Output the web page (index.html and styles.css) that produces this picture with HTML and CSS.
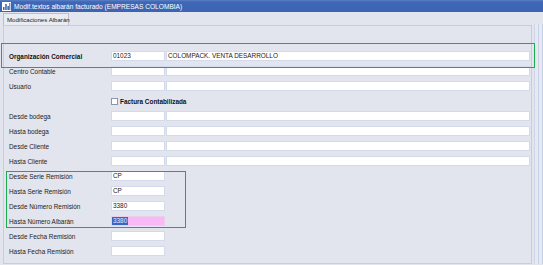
FILE: index.html
```html
<!DOCTYPE html>
<html>
<head>
<meta charset="utf-8">
<link rel="stylesheet" href="styles.css">
</head>
<body>
<div class="window">
  <div class="titlebar">
    <svg class="appicon" width="9" height="9" viewBox="0 0 9 9">
      <rect x="0" y="0" width="9" height="9" fill="#ffffff"/>
      <rect x="1" y="5" width="1.5" height="3" fill="#3a62b3"/>
      <rect x="3.2" y="2" width="1.5" height="6" fill="#3a62b3"/>
      <rect x="5.4" y="4" width="1.5" height="4" fill="#3a62b3"/>
      <rect x="7.3" y="1" width="1" height="7" fill="#3a62b3"/>
    </svg>
    <span class="title">Modif.textos albarán facturado (EMPRESAS COLOMBIA)</span>
  </div>
  <div class="tabstrip">
    <div class="tab">Modificaciones Albarán</div>
  </div>
  <div class="main">
    <div class="panel">
      <div class="row"><span class="label bold">Organización Comercial</span><span class="input">01023</span><span class="input">COLOMPACK. VENTA DESARROLLO</span></div>
      <div class="row"><span class="label">Centro Contable</span><span class="input"></span><span class="input"></span></div>
      <div class="row"><span class="label">Usuario</span><span class="input"></span><span class="input"></span></div>
      <div class="row"><span class="label"></span><span class="check"><span class="box"></span><span class="bold">Factura Contabilizada</span></span></div>
      <div class="row"><span class="label">Desde bodega</span><span class="input"></span><span class="input"></span></div>
      <div class="row"><span class="label">Hasta bodega</span><span class="input"></span><span class="input"></span></div>
      <div class="row"><span class="label">Desde Cliente</span><span class="input"></span><span class="input"></span></div>
      <div class="row"><span class="label">Hasta Cliente</span><span class="input"></span><span class="input"></span></div>
      <div class="row"><span class="label">Desde Serie Remisión</span><span class="input">CP</span></div>
      <div class="row shift"><span class="label">Hasta Serie Remisión</span><span class="input">CP</span></div>
      <div class="row"><span class="label">Desde Número Remisión</span><span class="input">3380</span></div>
      <div class="row"><span class="label">Hasta Número Albarán</span><span class="input pink"><span class="sel">3380</span></span></div>
      <div class="row"><span class="label">Desde Fecha Remisión</span><span class="input"></span></div>
      <div class="row"><span class="label">Hasta Fecha Remisión</span><span class="input"></span></div>
    </div>
    <div class="edge"></div>
  </div>
  <div class="mark mark1"></div>
  <div class="mark mark2"></div>
</div>
</body>
</html>
```

FILE: styles.css
```css
html, body {
  margin: 0;
  padding: 0;
}
body {
  width: 543px;
  height: 265px;
  overflow: hidden;
  background: #e2e5ee;
  font-family: "Liberation Sans", Arial, sans-serif;
  font-size: 6.4px;
  color: #1c1c1c;
}
.window {
  position: relative;
  width: 543px;
  height: 265px;
}
.titlebar {
  height: 12px;
  background: linear-gradient(#5b80c8 0, #3f67b6 2px, #3d64b3 100%);
  display: flex;
  align-items: center;
  gap: 3px;
  padding-left: 2px;
  box-sizing: border-box;
}
.appicon {
  display: block;
}
.title {
  color: #ffffff;
  font-size: 6.6px;
  white-space: nowrap;
}
.tabstrip {
  height: 13px;
  padding-left: 3px;
  display: flex;
  align-items: flex-end;
}
.tab {
  width: 66px;
  height: 12px;
  box-sizing: border-box;
  border: 1px solid #b6c0d1;
  border-bottom: none;
  background: #e9ecf3;
  font-size: 6.1px;
  line-height: 11px;
  padding-left: 3px;
  white-space: nowrap;
  color: #222;
}
.main {
  display: flex;
  height: 239px;
}
.panel {
  margin-left: 3px;
  width: 531px;
  height: 239px;
  box-sizing: border-box;
  border: 1px solid #c6cddb;
  padding: 25px 0 0 5px;
}
.edge {
  width: 9px;
  margin-left: 2px;
  box-sizing: border-box;
  border-left: 1px solid #cdd6e6;
  border-right: 1px solid #c4d0e6;
  background: linear-gradient(90deg, #e6e9f1 0, #e6e9f1 3px, #c9d4e8 3px, #c9d4e8 4px, #e6e9f1 4px);
  margin-top: -1px;
  height: 240px;
}
.row {
  display: grid;
  grid-template-columns: 101px 54px 364px;
  column-gap: 1px;
  height: 10px;
  margin-bottom: 5px;
  align-items: center;
}
.row.shift {
  margin-top: 1px;
}
.label {
  white-space: nowrap;
  color: #222;
}
.bold {
  font-weight: bold;
  color: #111;
}
.input {
  height: 10px;
  box-sizing: border-box;
  background: #ffffff;
  border: 1px solid #d3daea;
  line-height: 8px;
  padding-left: 1px;
  white-space: nowrap;
  color: #1a1a1a;
}
.input.pink {
  background: #fbb8f8;
  border-color: #e9cfe9;
  padding-left: 0;
}
.sel {
  background: #3c64c4;
  color: #e8e8ff;
  display: inline-block;
  line-height: 8px;
  padding: 0 1px;
}
.check {
  grid-column: 2 / 4;
  display: flex;
  align-items: center;
  gap: 2px;
}
.box {
  width: 7px;
  height: 7px;
  box-sizing: border-box;
  border: 1px solid #8d96a8;
  background: #ffffff;
}
.mark {
  position: absolute;
  border: 1px solid #1faa4f;
  box-sizing: border-box;
}
.mark1 {
  left: 1px;
  top: 43px;
  width: 534px;
  height: 25px;
}
.mark2 {
  left: 6px;
  top: 171px;
  width: 180px;
  height: 57px;
}
```
